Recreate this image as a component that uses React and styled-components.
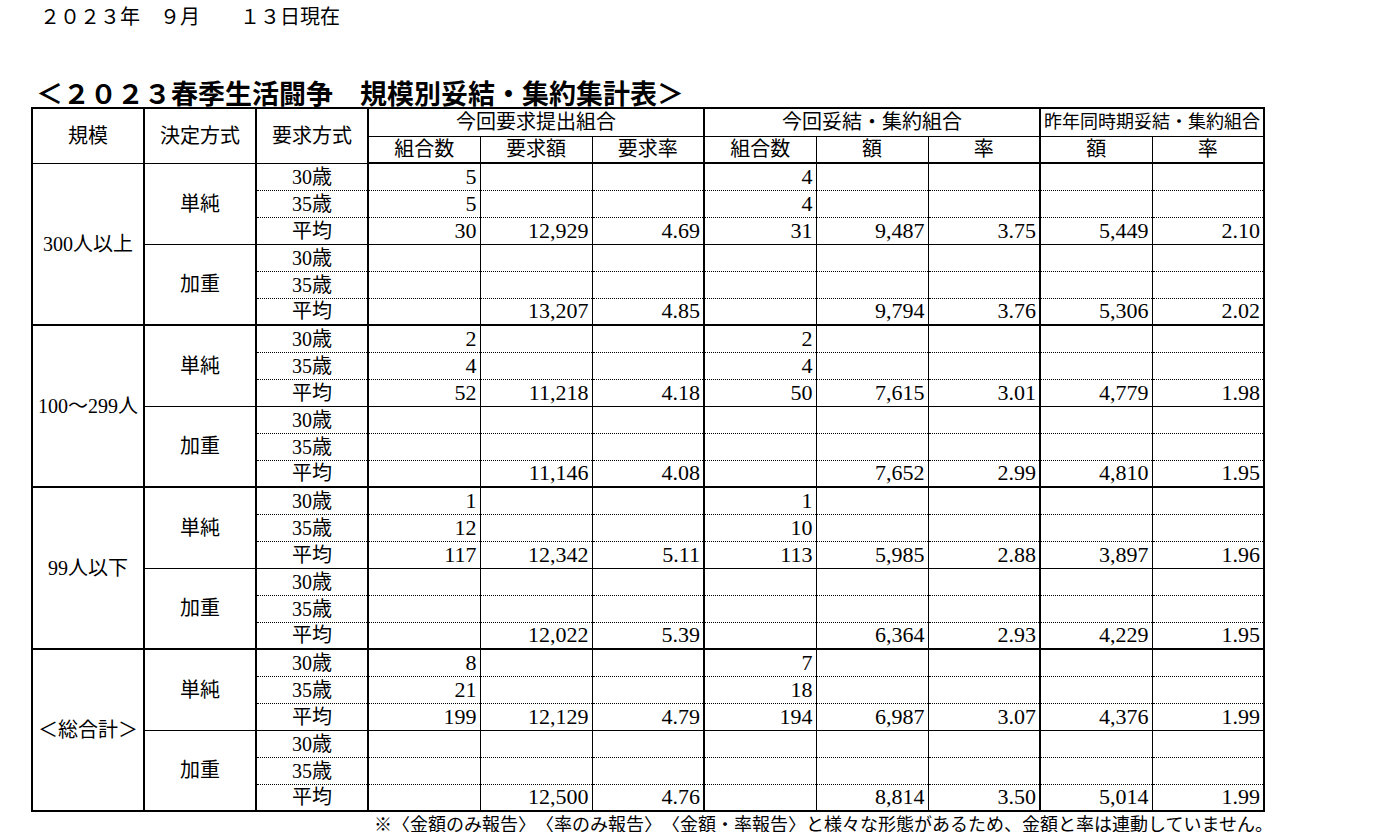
import React from 'react';
import styled, { createGlobalStyle } from 'styled-components';

const GlobalStyle = createGlobalStyle`
    body {
        margin: 0;
        background: #fff;
        color: #000;
    }
`;

const groups = [
    {
        name: '300人以上',
        simple: [
            ['5', '', '', '4', '', '', '', ''],
            ['5', '', '', '4', '', '', '', ''],
            ['30', '12,929', '4.69', '31', '9,487', '3.75', '5,449', '2.10'],
        ],
        weighted: [
            ['', '', '', '', '', '', '', ''],
            ['', '', '', '', '', '', '', ''],
            ['', '13,207', '4.85', '', '9,794', '3.76', '5,306', '2.02'],
        ],
    },
    {
        name: '100〜299人',
        simple: [
            ['2', '', '', '2', '', '', '', ''],
            ['4', '', '', '4', '', '', '', ''],
            ['52', '11,218', '4.18', '50', '7,615', '3.01', '4,779', '1.98'],
        ],
        weighted: [
            ['', '', '', '', '', '', '', ''],
            ['', '', '', '', '', '', '', ''],
            ['', '11,146', '4.08', '', '7,652', '2.99', '4,810', '1.95'],
        ],
    },
    {
        name: '99人以下',
        simple: [
            ['1', '', '', '1', '', '', '', ''],
            ['12', '', '', '10', '', '', '', ''],
            ['117', '12,342', '5.11', '113', '5,985', '2.88', '3,897', '1.96'],
        ],
        weighted: [
            ['', '', '', '', '', '', '', ''],
            ['', '', '', '', '', '', '', ''],
            ['', '12,022', '5.39', '', '6,364', '2.93', '4,229', '1.95'],
        ],
    },
    {
        name: '＜総合計＞',
        simple: [
            ['8', '', '', '7', '', '', '', ''],
            ['21', '', '', '18', '', '', '', ''],
            ['199', '12,129', '4.79', '194', '6,987', '3.07', '4,376', '1.99'],
        ],
        weighted: [
            ['', '', '', '', '', '', '', ''],
            ['', '', '', '', '', '', '', ''],
            ['', '12,500', '4.76', '', '8,814', '3.50', '5,014', '1.99'],
        ],
    },
];

const ageLabels = ['30歳', '35歳', '平均'];
const methods = [
    { key: 'simple', label: '単純' },
    { key: 'weighted', label: '加重' },
];
const subHeads = ['組合数', '要求額', '要求率', '組合数', '額', '率', '額', '率'];

const lineFor = (kind) => {
    if (kind === 'thick') return '2px solid #000';
    if (kind === 'dotted') return '1px dotted #000';
    if (kind === 'none') return 'none';
    return '1px solid #000';
};

const App = () => {
    return (
        <>
            <GlobalStyle />
            <Page>
                <DateLine>２０２３年　９月　　１３日現在</DateLine>
                <Title>＜２０２３春季生活闘争　規模別妥結・集約集計表＞</Title>
                <Sheet>
                    <colgroup>
                        {Array.from({ length: 11 }).map((_, i) => (
                            <Col key={i} />
                        ))}
                    </colgroup>
                    <thead>
                        <HeadRow $h={28}>
                            <HeadCell rowSpan={2} $right="thick">規模</HeadCell>
                            <HeadCell rowSpan={2} $right="thick">決定方式</HeadCell>
                            <HeadCell rowSpan={2} $right="thick">要求方式</HeadCell>
                            <HeadCell colSpan={3} $right="thick">今回要求提出組合</HeadCell>
                            <HeadCell colSpan={3} $right="thick">今回妥結・集約組合</HeadCell>
                            <HeadCell colSpan={2} $right="thick" $small>昨年同時期妥結・集約組合</HeadCell>
                        </HeadRow>
                        <HeadRow $h={27}>
                            {subHeads.map((h, i) => (
                                <HeadCell key={i} $bottom="thick" $right={i === 2 || i === 5 || i === 7 ? 'thick' : 'thin'}>
                                    {h}
                                </HeadCell>
                            ))}
                        </HeadRow>
                    </thead>
                    <tbody>
                        {groups.map((g) =>
                            methods.map((m, mi) =>
                                g[m.key].map((vals, ri) => {
                                    const bottom = ri < 2 ? 'dotted' : mi === 0 ? 'thin' : 'thick';
                                    return (
                                        <DataRow key={g.name + m.key + ri}>
                                            {mi === 0 && ri === 0 && (
                                                <Cell rowSpan={6} $bottom="thick" $right="thick">
                                                    {g.name}
                                                </Cell>
                                            )}
                                            {ri === 0 && (
                                                <Cell rowSpan={3} $bottom={mi === 0 ? 'thin' : 'thick'} $right="thick">
                                                    {m.label}
                                                </Cell>
                                            )}
                                            <Cell $bottom={bottom} $right="thick">{ageLabels[ri]}</Cell>
                                            {vals.map((v, i) => (
                                                <NumCell
                                                    key={i}
                                                    $bottom={bottom}
                                                    $right={i === 2 || i === 5 || i === 7 ? 'thick' : 'thin'}
                                                >
                                                    {v}
                                                </NumCell>
                                            ))}
                                        </DataRow>
                                    );
                                })
                            )
                        )}
                    </tbody>
                </Sheet>
                <Note>※〈金額のみ報告〉　〈率のみ報告〉　〈金額・率報告〉と様々な形態があるため、金額と率は連動していません。</Note>
            </Page>
        </>
    );
};

export default App;

const Page = styled.div`
    width: 1377px;
    padding-left: 31px;
    box-sizing: border-box;
    font-family: "Liberation Serif", "Noto Sans CJK JP", serif;
`;

const DateLine = styled.div`
    padding-top: 6px;
    margin-left: 9px;
    height: 20px;
    font-family: "Noto Sans CJK JP", sans-serif;
    font-size: 20px;
    line-height: 20px;
`;

const Title = styled.div`
    margin-top: 52px;
    margin-left: 5px;
    height: 29px;
    font-family: "Noto Sans CJK JP", sans-serif;
    font-weight: 700;
    font-size: 27px;
    line-height: 29px;
    white-space: nowrap;
`;

const Sheet = styled.table`
    border-collapse: collapse;
    table-layout: fixed;
    width: 1234px;
    border: 2px solid #000;
    font-size: 20px;
`;

const Col = styled.col`
    width: 112px;
`;

const HeadRow = styled.tr`
    height: ${(p) => p.$h}px;
`;

const DataRow = styled.tr`
    height: 27px;
`;

const Cell = styled.td`
    padding: 0 3px;
    text-align: center;
    vertical-align: middle;
    line-height: 20px;
    white-space: nowrap;
    overflow: hidden;
    border-right: ${(p) => lineFor(p.$right)};
    border-bottom: ${(p) => lineFor(p.$bottom || 'thin')};
`;

const HeadCell = styled(Cell).attrs({ as: 'th' })`
    font-weight: 400;
    font-size: ${(p) => (p.$small ? '18px' : '20px')};
    padding: 0;
`;

const NumCell = styled(Cell)`
    text-align: right;
    padding-right: 3px;
    font-size: 22px;
`;

const Note = styled.div`
    width: 1242px;
    margin-top: 2px;
    text-align: right;
    font-family: "Noto Sans CJK JP", sans-serif;
    font-size: 18px;
    line-height: 18px;
    white-space: nowrap;
`;
